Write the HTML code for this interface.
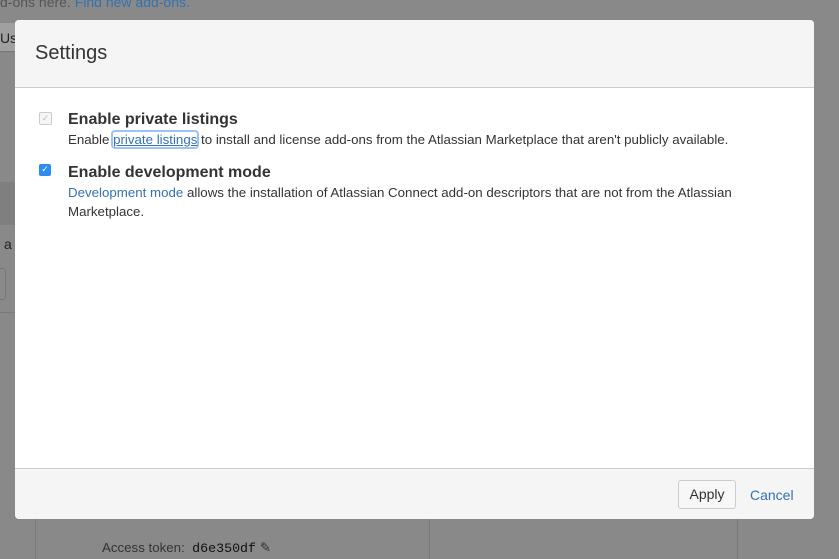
<!DOCTYPE html>
<html><head><style>
body{margin:0;width:839px;height:559px;background:#898989;position:relative;overflow:hidden;font-family:"Liberation Sans",Arial,sans-serif;color:#333}
.bg{position:absolute}
.dlg{position:absolute;left:15px;top:20px;width:799px;height:499px;background:#fff;border-radius:4px;overflow:hidden}
.hd{height:68px;background:#f5f5f5;border-bottom:1px solid #ccc;box-sizing:border-box}
.hd h2{margin:0;position:absolute;left:20px;top:22px;font-size:20px;font-weight:normal;color:#333}
.ft{position:absolute;left:0;bottom:0;width:100%;height:50px;background:#f5f5f5;border-top:1px solid #ccc}
.opt{position:absolute;left:53px;font-size:13.3px;line-height:19px}
.opt b{font-size:16px;display:block;line-height:20px}
a{color:#3572b0;text-decoration:none}
.cb{position:absolute;left:24px;width:11px;height:11px;border-radius:2px}
</style></head><body>
<div class="bg" style="left:0;top:-6px;font-size:14px;color:#555">d-ons here. <span style="color:#3572b0">Find new add-ons.</span></div>
<div class="bg" style="left:0;top:23px;width:16px;height:28px;background:#a0a0a0;border-bottom:1px solid #777"></div>
<div class="bg" style="left:0;top:30px;font-size:14px;color:#222">Use</div>
<div class="bg" style="left:0;top:182px;width:16px;height:43px;background:#7f7f7f"></div>
<div class="bg" style="left:4px;top:236px;font-size:14px;color:#222">a</div>
<div class="bg" style="left:-8px;top:268px;width:12px;height:30px;border:1px solid #777;border-radius:3px"></div>
<div class="bg" style="left:0;top:312px;width:16px;height:1px;background:#7a7a7a"></div>
<div class="bg" style="left:35px;top:519px;width:1px;height:40px;background:#7a7a7a"></div>
<div class="bg" style="left:429px;top:519px;width:1px;height:40px;background:#7a7a7a"></div>
<div class="bg" style="left:737px;top:519px;width:1px;height:40px;background:#7a7a7a"></div>
<div class="bg" style="left:102px;top:540px;font-size:13.3px;color:#333">Access token: &nbsp;<span style="font-family:'Liberation Mono',monospace;color:#111">d6e350df</span> ✎</div>
<div class="dlg">
<div class="hd"><h2>Settings</h2></div>
<div class="cb" style="top:92px;border:1px solid #ccc;background:#f7f7f7;color:#bbb;font-size:9px;line-height:11px;text-align:center">✓</div>
<div class="opt" style="top:90px"><b>Enable private listings</b>Enable <a style="text-decoration:underline;box-shadow:0 0 0 2px #9cc3f5;border-radius:2px">private listings</a> to install and license add-ons from the Atlassian Marketplace that aren't publicly available.</div>
<div class="cb" style="top:144px;background:#2d8cf0;color:#fff;font-size:9px;line-height:11px;text-align:center;width:12px;height:12px">✓</div>
<div class="opt" style="top:143px;width:680px"><b>Enable development mode</b><a>Development mode</a> allows the installation of Atlassian Connect add-on descriptors that are not from the Atlassian Marketplace.</div>
<div class="ft">
<div style="position:absolute;left:663px;top:11px;width:58px;height:29px;border:1px solid #ccc;border-radius:3px;background:#f7f7f7;box-sizing:border-box;text-align:center;line-height:27px;font-size:14px;color:#333">Apply</div>
<a style="position:absolute;left:735px;top:18px;font-size:14px">Cancel</a>
</div>
</div>
</body></html>
